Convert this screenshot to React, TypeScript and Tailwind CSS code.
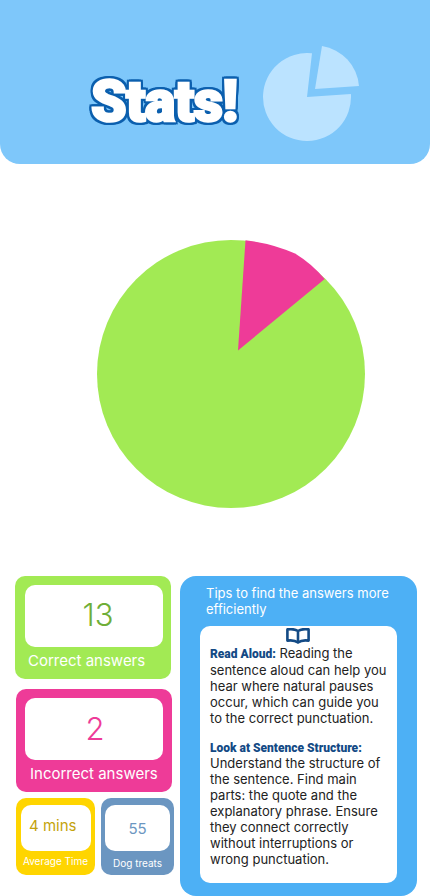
const inter = 'font-["Inter",sans-serif]'

function StatCard({ value, label, bg, color, className, labelPad, valueClass }: { value: string; label: string; bg: string; color: string; className: string; labelPad: string; valueClass: string }) {
  return (
    <div className={`w-[156px] h-[103px] rounded-[10px] pt-[9px] ${bg} ${className}`}>
      <div className={`w-[138px] h-[62px] rounded-[10px] bg-white flex items-center justify-center text-[31px] font-light ${color} ${valueClass}`}>
        {value}
      </div>
      <div className={`mt-[4px] text-[15px] leading-[20px] text-white ${labelPad}`}>{label}</div>
    </div>
  )
}

export default function App() {
  return (
    <div className={`w-[430px] h-[896px] bg-white overflow-hidden ${inter}`}>
      <header className="h-[164px] bg-[#7EC7FA] rounded-b-[20px] flex items-start">
        <h1 className="ml-[91px] mt-[72px] w-[156px] whitespace-nowrap text-[57px] leading-[60px] font-black text-white font-['Roboto',sans-serif] tracking-[-0.6px] [-webkit-text-stroke:2.5px_#ffffff] [filter:drop-shadow(2px_0_0_#0B5FAE)_drop-shadow(-2px_0_0_#0B5FAE)_drop-shadow(0_2px_0_#0B5FAE)_drop-shadow(0_-2px_0_#0B5FAE)]">
          Stats!
        </h1>
        <svg className="ml-[16px] mt-[46px]" width="96" height="96" viewBox="263 46 96 96">
          <path d="M312 53.3A44 44 0 1 0 350.9 94L307 97Z" fill="#BBE3FF" />
          <path d="M322 46A44 44 0 0 1 359 86L315 89Z" fill="#BBE3FF" />
        </svg>
      </header>

      <div className="h-[412px] flex">
        <svg className="ml-[97px] mt-[76px]" width="268" height="268" viewBox="97 240 268 268">
          <circle cx="231" cy="374" r="134" fill="#A2EA54" />
          <path d="M245.5 240.3Q271 243 295 253.5Q311 263 324.7 279L238 350.5Z" fill="#EE3B98" />
        </svg>
      </div>

      <div className="flex">
        <div className="ml-[15px] w-[159px] shrink-0">
          <StatCard value="13" label="Correct answers" bg="bg-[#A2EA54]" color="text-[#6FAE38]" className="pl-[10px]" labelPad="pl-[3px]" valueClass="pl-[8px] pb-[2px]" />
          <StatCard value="2" label="Incorrect answers" bg="bg-[#EE3B98]" color="text-[#EE3B98]" className="mt-[10px] ml-px pl-[9px]" labelPad="pl-[5px]" valueClass="pl-[2px]" />
          <div className="mt-[6px] ml-px flex gap-[6px]">
            <div className="w-[79px] h-[77px] rounded-[10px] bg-[#FFD500] pt-[7px]">
              <div className="ml-[5px] w-[70px] h-[46px] rounded-[10px] bg-white pl-[8px] pt-[11px] text-[15px] leading-[20px] text-[#C4A30C]">4 mins</div>
              <div className="mt-[3px] text-center text-[10px] leading-[14px] text-white">Average Time</div>
            </div>
            <div className="w-[73px] h-[77px] rounded-[10px] bg-[#6B96C1] pt-[7px]">
              <div className="ml-[4px] w-[65px] h-[46px] rounded-[10px] bg-white flex items-center justify-center pt-[2px] text-[15px] text-[#6B96C1]">55</div>
              <div className="mt-[5px] text-center text-[10px] leading-[14px] text-white">Dog treats</div>
            </div>
          </div>
        </div>

        <div className="ml-[6px] w-[237px] h-[320px] rounded-[16px] bg-[#4DB0F5] pt-[9px]">
          <p className="ml-[26px] text-[13px] leading-[16px] text-white">
            Tips to find the answers more<br />efficiently
          </p>
          <div className="ml-[20px] mt-[9px] w-[197px] h-[257px] rounded-[10px] bg-white px-[10px] pt-[2px] text-[13px] leading-[16px] text-[#222222]">
            <div className="flex justify-center h-[16px] -ml-[1px]">
              <svg width="24" height="16" viewBox="0 0 24 16" fill="none" stroke="#134A85" strokeWidth="2.6" strokeLinejoin="round">
                <path d="M12 3C9 1 5 .9 1.4 1.4V12.6C5 12.1 9 12.2 12 14.6C15 12.2 19 12.1 22.6 12.6V1.4C19 .9 15 1 12 3ZM12 3V14.6" />
              </svg>
            </div>
            <p className="mt-px">
              <b className="font-['Roboto',sans-serif] text-[12px] font-black text-[#134A85]">Read Aloud:</b> Reading the sentence aloud can help you hear where natural pauses occur, which can guide you to the correct punctuation.
            </p>
            <p className="mt-[14px]">
              <b className="block h-[15px] font-['Roboto',sans-serif] text-[12px] font-black text-[#134A85]">Look at Sentence Structure:</b>
              Understand the structure of the sentence. Find main parts: the quote and the explanatory phrase. Ensure they connect correctly without interruptions or wrong punctuation.
            </p>
          </div>
        </div>
      </div>
    </div>
  )
}
